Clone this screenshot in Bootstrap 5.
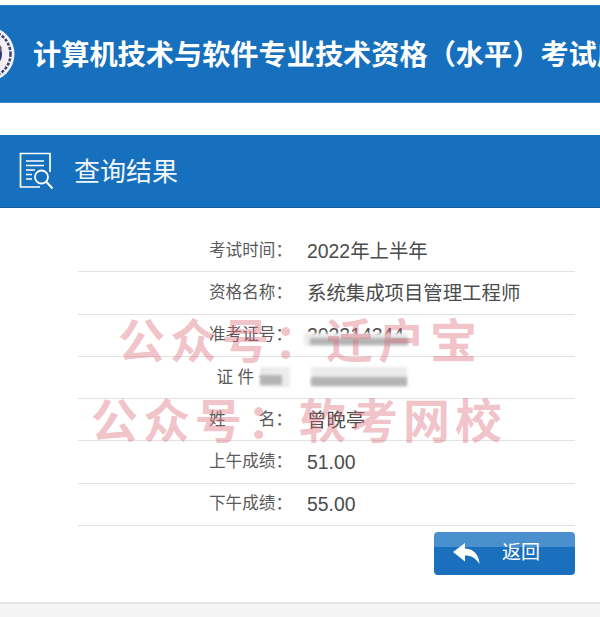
<!DOCTYPE html>
<html lang="zh">
<head>
    <meta charset="UTF-8">
    <meta name="viewport" content="width=device-width, initial-scale=1.0">
    <title>查询结果</title>
    <link href="https://cdn.jsdelivr.net/npm/bootstrap@5.3.0/dist/css/bootstrap.min.css" rel="stylesheet">
    <style>
        body {
            font-family: "Liberation Sans", "Noto Sans CJK SC", sans-serif;
            height: 617px;
            overflow: hidden;
            padding-top: 5px;
            position: relative;
            background: #fff;
        }
        .site-head {
            height: 98px;
            background: #1670bd;
            border-top: 1px solid #2b7cc0;
            border-bottom: 1px solid #3b8acb;
            overflow: hidden;
            white-space: nowrap;
            margin-bottom: 32px;
        }
        .site-logo {
            width: 15px;
            height: 56px;
            flex: none;
        }
        .site-title {
            font-size: 28.2px;
            font-weight: 700;
            color: #fff;
            margin-left: 18px;
            padding-top: 2px;
        }
        .result-head {
            height: 73px;
            background: #1670bd;
            border-bottom: 1px solid #125f9f;
            padding-left: 19px;
        }
        .result-title {
            font-size: 26px;
            color: #f2f7fb;
            margin-left: 20px;
            padding-top: 3px;
        }
        .result-body {
            padding: 22px 25px 0 78px;
        }
        .info-row {
            height: 42.3px;
            border-bottom: 1px solid #e2e2e2;
            padding-top: 1px;
        }
        .info-label {
            width: 214px;
            font-size: 16.6px;
            text-align: right;
            color: #5a5a5a;
        }
        .info-value {
            margin-left: 15px;
            font-size: 19.4px;
            color: #4c4c4c;
            position: relative;
        }
        .smudge {
            position: absolute;
            background: #ececec;
            filter: blur(1.5px);
        }
        .smudge-dark {
            background: #b4b4b4;
        }
        .back-btn {
            width: 141px;
            height: 43px;
            margin-top: 6px;
            border-radius: 4px;
            border: 0;
            color: #fff;
            font-size: 19px;
            background: linear-gradient(#4a90cf 0, #4a90cf 36%, #1a70bc 36%, #1a70bc 100%);
            padding: 0 0 0 19px;
        }
        .back-btn span {
            margin-left: 22px;
        }
        .page-foot {
            position: absolute;
            left: 0;
            right: 0;
            top: 602px;
            bottom: 0;
            background: #f4f4f4;
            border-top: 2px solid #e6e6e6;
        }
        .stamp {
            position: absolute;
            font-family: "Noto Sans CJK SC", sans-serif;
            font-weight: 700;
            font-size: 47px;
            line-height: 1;
            letter-spacing: 5px;
            color: rgba(222, 110, 125, .42);
            white-space: nowrap;
            pointer-events: none;
        }
    </style>
</head>
<body>

<div class="site-head d-flex align-items-center">
    <svg class="site-logo" viewBox="0 0 15 56">
        <circle cx="-13" cy="28" r="27.5" fill="#f4f2f4"/>
        <circle cx="-13" cy="28" r="23.5" fill="none" stroke="#3a3f7d" stroke-width="2.5" stroke-dasharray="3 1.5"/>
        <circle cx="-13" cy="28" r="19" fill="#f3eef0"/>
        <circle cx="-13" cy="28" r="15" fill="#2f3478"/>
        <path d="M-6 10 L2 22 L-3 34 L-8 20 Z" fill="#7b5a78"/>
    </svg>
    <div class="site-title">计算机技术与软件专业技术资格（水平）考试成绩查询</div>
</div>

<div class="result-head d-flex align-items-center">
    <svg width="35" height="38" viewBox="0 0 35 38" fill="none" stroke="#fff" stroke-width="1.7">
        <path d="M21 35H1.5V1.5H31V20"/>
        <path d="M7 9H25M7 13.5H25M7 18H16M7 22.5H13M7 27H13"/>
        <circle cx="22.5" cy="25" r="6.5" stroke-width="1.8"/>
        <path d="M27.5 30L33.5 36.5" stroke-width="2"/>
    </svg>
    <div class="result-title">查询结果</div>
</div>

<div class="result-body">
    <div class="info-row d-flex align-items-center"><div class="info-label">考试时间：</div><div class="info-value">2022年上半年</div></div>
    <div class="info-row d-flex align-items-center"><div class="info-label">资格名称：</div><div class="info-value">系统集成项目管理工程师</div></div>
    <div class="info-row d-flex align-items-center"><div class="info-label">准考证号：</div><div class="info-value">202214344<i class="smudge" style="left:-3px;top:12px;width:104px;height:13px"></i><i class="smudge smudge-dark" style="left:3px;top:17px;width:98px;height:7px"></i></div></div>
    <div class="info-row d-flex align-items-center"><div class="info-label">证 件 号：</div><div class="info-value" style="width:100px;height:22px"><i class="smudge" style="left:-47px;top:0;width:30px;height:20px"></i><i class="smudge smudge-dark" style="left:-47px;top:8px;width:22px;height:10px"></i><i class="smudge" style="left:4px;top:0;width:96px;height:20px"></i><i class="smudge smudge-dark" style="left:4px;top:10px;width:96px;height:9px"></i></div></div>
    <div class="info-row d-flex align-items-center"><div class="info-label">姓　　名：</div><div class="info-value">曾晚亭</div></div>
    <div class="info-row d-flex align-items-center"><div class="info-label">上午成绩：</div><div class="info-value">51.00</div></div>
    <div class="info-row d-flex align-items-center"><div class="info-label">下午成绩：</div><div class="info-value">55.00</div></div>
    <div class="d-flex justify-content-end">
        <button type="button" class="btn back-btn d-flex align-items-center">
            <svg width="27" height="21" viewBox="0 0 27 21"><path d="M0 9L12 0V5.5C21 6 26 12 26.5 21C23 15 18 12.5 12 12.5V18.5Z" fill="#fff"/></svg>
            <span>返回</span>
        </button>
    </div>
</div>

<div class="page-foot"></div>

<div class="stamp" style="left:118px;top:314px">公众号：迁户宝</div>
<div class="stamp" style="left:91px;top:394px">公众号：软考网校</div>

<script src="https://cdn.jsdelivr.net/npm/bootstrap@5.3.0/dist/js/bootstrap.bundle.min.js"></script>
</body>
</html>
